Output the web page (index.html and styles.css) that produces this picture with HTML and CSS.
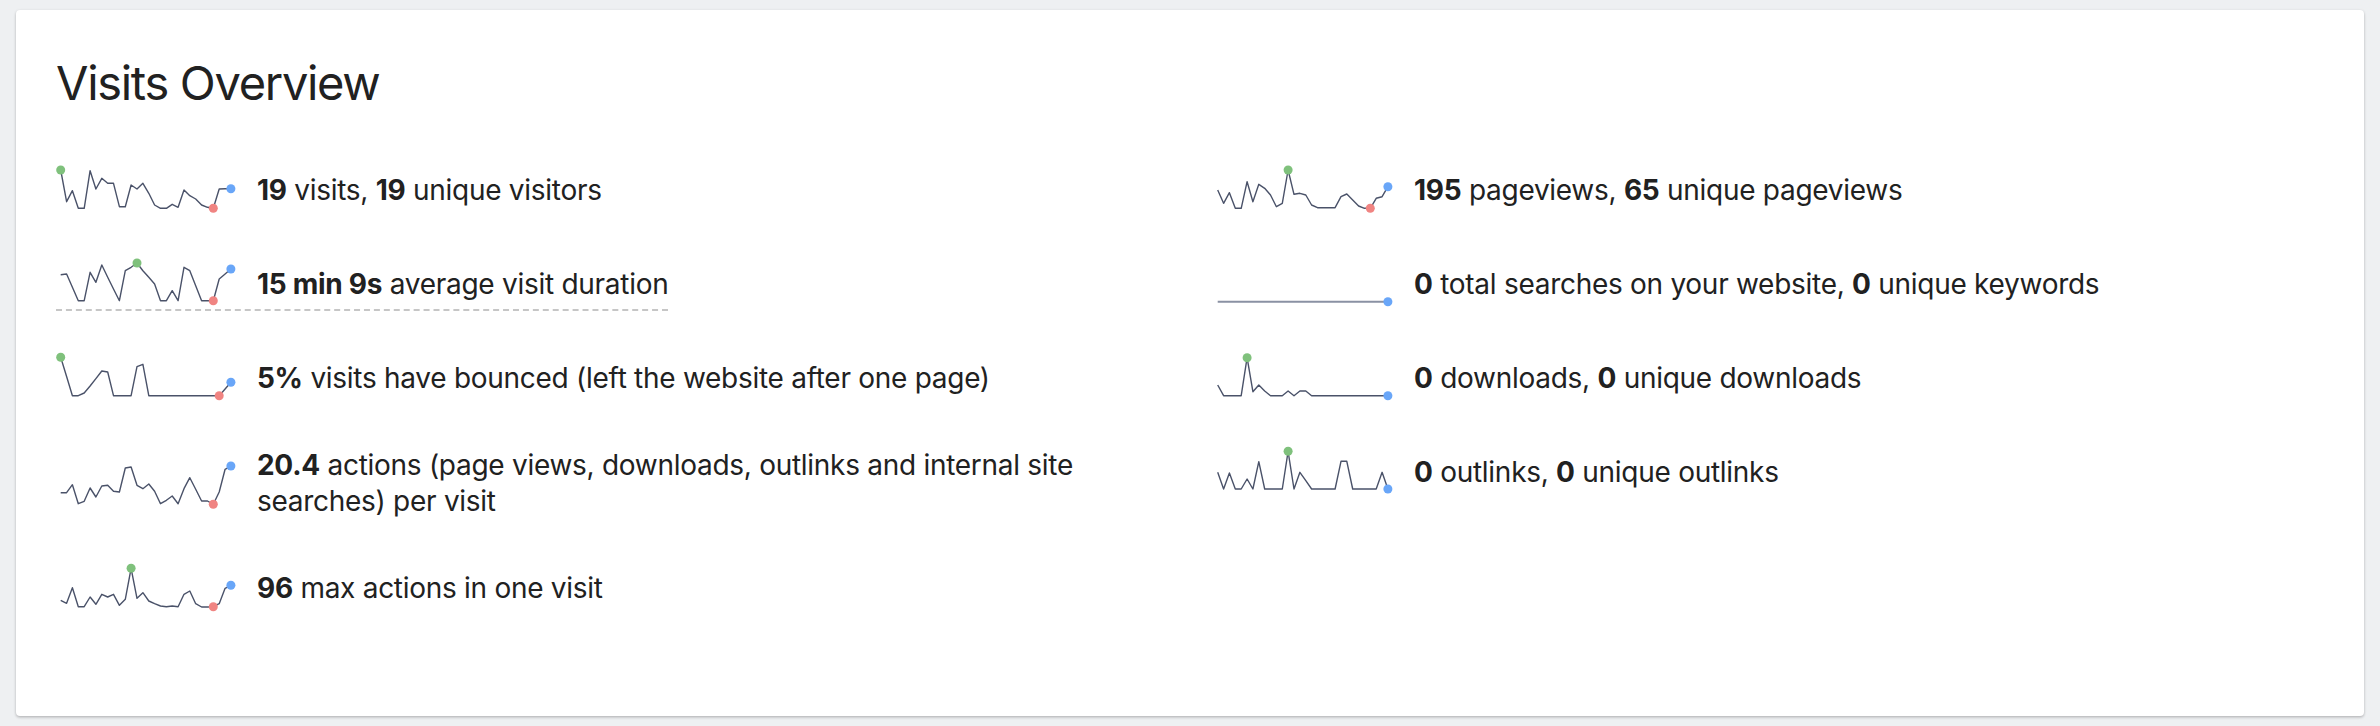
FILE: index.html
```html
<!DOCTYPE html>
<html lang="en">
<head>
<meta charset="utf-8">
<title>Visits Overview</title>
<link rel="stylesheet" href="styles.css">
</head>
<body>
<div class="card">
  <h2 class="title">Visits Overview</h2>
  <div class="grid">
    <div class="col">
      <div class="row">
        <svg class="spark" width="180" height="50" viewBox="0 0 180 50">
          <polyline points="4.7,5 10.6,36.7 16.4,25.7 22.3,43.3 28.2,43.3 34.1,5.7 39.9,24 45.8,13.3 51.7,18.3 57.5,18.3 63.4,41.7 69.3,41.7 75.1,20 81,24 86.9,18.3 92.8,28.3 98.6,40 104.5,43.3 110.4,43.3 116.2,39.3 122.1,42.3 128,25 133.8,30.7 139.7,34 145.6,40 151.5,42.3 157.3,43.3 163.2,24 169.1,23.7 174.9,23.7"/>
          <circle class="max" cx="4.7" cy="5" r="4.5"/>
          <circle class="min" cx="157.3" cy="43.3" r="4.5"/>
          <circle class="last" cx="174.9" cy="23.7" r="4.5"/>
        </svg>
        <div class="text"><strong>19</strong> visits, <strong>19</strong> unique visitors</div>
      </div>
      <div class="row active">
        <svg class="spark" width="180" height="50" viewBox="0 0 180 50">
          <polyline points="4.7,15.7 10.6,15 16.4,28.3 22.3,41.7 28.2,41.7 34.1,13.3 39.9,23.3 45.8,6 51.7,18.3 57.5,30 63.4,41.7 69.3,11.7 75.1,8.3 81,4 86.9,11.7 92.8,18.3 98.6,25 104.5,41.7 110.4,41.7 116.2,31.7 122.1,41.7 128,8.3 133.8,11.7 139.7,26.7 145.6,41.7 151.5,41.7 157.3,41.7 163.2,20 169.1,15 174.9,10"/>
          <circle class="max" cx="81" cy="4" r="4.5"/>
          <circle class="min" cx="157.3" cy="41.7" r="4.5"/>
          <circle class="last" cx="174.9" cy="10" r="4.5"/>
        </svg>
        <div class="text"><strong>15 min 9s</strong> average visit duration</div>
      </div>
      <div class="row">
        <svg class="spark" width="180" height="50" viewBox="0 0 180 50">
          <polyline points="4.7,4.3 10.6,23.5 16.4,42.7 22.3,42.7 28.2,40 34.1,33 39.9,25.6 45.8,18 51.7,19 57.5,42.7 63.4,42.7 69.3,42.7 75.1,42.7 81,13.7 86.9,11.3 92.8,42.7 98.6,42.7 104.5,42.7 110.4,42.7 116.2,42.7 122.1,42.7 128,42.7 133.8,42.7 139.7,42.7 145.6,42.7 151.5,42.7 157.3,42.7 163.2,42.7 169.1,36 174.9,29.3"/>
          <circle class="max" cx="4.7" cy="4.3" r="4.5"/>
          <circle class="min" cx="163.2" cy="42.7" r="4.5"/>
          <circle class="last" cx="174.9" cy="29.3" r="4.5"/>
        </svg>
        <div class="text"><strong>5%</strong> visits have bounced (left the website after one page)</div>
      </div>
      <div class="row">
        <svg class="spark" width="180" height="50" viewBox="0 0 180 50">
          <polyline points="4.7,34.7 10.6,34.7 16.4,26.7 22.3,45.7 28.2,43.3 34.1,30 39.9,39 45.8,28 51.7,27.3 57.5,33.3 63.4,34 69.3,10 75.1,9 81,27.3 86.9,30.7 92.8,26 98.6,33.3 104.5,45.7 110.4,42.3 116.2,38 122.1,45.7 128,30.7 133.8,19.7 139.7,31.3 145.6,43 151.5,43 157.3,46.3 163.2,34 169.1,11.3 174.9,8"/>
          <circle class="min" cx="157.3" cy="46.3" r="4.5"/>
          <circle class="last" cx="174.9" cy="8" r="4.5"/>
        </svg>
        <div class="text"><strong>20.4</strong> actions (page views, downloads, outlinks and internal site searches) per visit</div>
      </div>
      <div class="row">
        <svg class="spark" width="180" height="50" viewBox="0 0 180 50">
          <polyline points="4.7,37.3 10.6,40.3 16.4,24.7 22.3,43.7 28.2,43.7 34.1,34 39.9,41.3 45.8,31.3 51.7,34 57.5,31.3 63.4,42.3 69.3,36.3 75.1,5.3 81,35.3 86.9,29.7 92.8,38 98.6,40.7 104.5,43 110.4,43.7 116.2,43 122.1,43.7 128,31.3 133.8,28 139.7,40.7 145.6,44 151.5,44 157.3,43.7 163.2,40.7 169.1,25.3 174.9,22.3"/>
          <circle class="max" cx="75.1" cy="5.3" r="4.5"/>
          <circle class="min" cx="157.3" cy="43.7" r="4.5"/>
          <circle class="last" cx="174.9" cy="22.3" r="4.5"/>
        </svg>
        <div class="text"><strong>96</strong> max actions in one visit</div>
      </div>
    </div>
    <div class="col">
      <div class="row">
        <svg class="spark" width="180" height="50" viewBox="0 0 180 50">
          <polyline points="4.7,25 10.6,38.3 16.4,27.7 22.3,43.3 28.2,43.3 34.1,16.7 39.9,36.7 45.8,19.3 51.7,23.3 57.5,30 63.4,41.7 69.3,38.3 75.1,5 81,29.3 86.9,28.3 92.8,30 98.6,40 104.5,42.7 110.4,42.7 116.2,42.7 122.1,42.7 128,31.7 133.8,29 139.7,35 145.6,41 151.5,43.3 157.3,43.3 163.2,33.3 169.1,31.7 174.9,21.7"/>
          <circle class="max" cx="75.1" cy="5" r="4.5"/>
          <circle class="min" cx="157.3" cy="43.3" r="4.5"/>
          <circle class="last" cx="174.9" cy="21.7" r="4.5"/>
        </svg>
        <div class="text"><strong>195</strong> pageviews, <strong>65</strong> unique pageviews</div>
      </div>
      <div class="row">
        <svg class="spark" width="180" height="50" viewBox="0 0 180 50">
          <polyline class="flat" points="4.7,42.7 174.9,42.7"/>
          <circle class="last" cx="174.9" cy="42.7" r="4.5"/>
        </svg>
        <div class="text"><strong>0</strong> total searches on your website, <strong>0</strong> unique keywords</div>
      </div>
      <div class="row">
        <svg class="spark" width="180" height="50" viewBox="0 0 180 50">
          <polyline points="4.7,32 10.6,42.7 16.4,42.7 22.3,42.7 28.2,42.7 34.1,4.7 39.9,38.7 45.8,32 51.7,38 57.5,42.7 63.4,42.7 69.3,42.7 75.1,38 81,42.7 86.9,38 92.8,38 98.6,42.7 174.9,42.7"/>
          <circle class="max" cx="34.1" cy="4.7" r="4.5"/>
          <circle class="last" cx="174.9" cy="42.7" r="4.5"/>
        </svg>
        <div class="text"><strong>0</strong> downloads, <strong>0</strong> unique downloads</div>
      </div>
      <div class="row">
        <svg class="spark" width="180" height="50" viewBox="0 0 180 50">
          <polyline points="4.7,25.3 10.6,42 16.4,26 22.3,42 28.2,42 34.1,32 39.9,42 45.8,14.7 51.7,42 69.3,42 75.1,4.3 81,42 86.9,25.3 92.8,33.7 98.6,42 122.1,42 128,14.3 133.8,14.3 139.7,42 163.2,42 169.1,25.3 174.9,42"/>
          <circle class="max" cx="75.1" cy="4.3" r="4.5"/>
          <circle class="last" cx="174.9" cy="42" r="4.5"/>
        </svg>
        <div class="text"><strong>0</strong> outlinks, <strong>0</strong> unique outlinks</div>
      </div>
    </div>
  </div>
</div>
</body>
</html>
```
FILE: styles.css
```css
html, body {
  margin: 0;
}

body {
  background: #eef0f2;
  padding: 10px 16px;
  font-family: "Inter", "Liberation Sans", Arial, sans-serif;
  color: #212121;
}

.card {
  background: #ffffff;
  border-radius: 4px;
  box-shadow: 0 1px 3px rgba(0, 0, 0, 0.22), 0 2px 3px rgba(0, 0, 0, 0.06);
  padding: 45px 40px 101px;
}

.title {
  margin: 0 0 54px;
  font-size: 47px;
  line-height: 56px;
  font-weight: 400;
  letter-spacing: -1.3px;
  color: #212121;
}

.grid {
  display: grid;
  grid-template-columns: 1157px 1fr;
}

.col {
  display: flex;
  flex-direction: column;
  align-items: flex-start;
  gap: 42px;
}

.row {
  display: flex;
  align-items: center;
  gap: 21px;
  border-bottom: 2px dashed transparent;
}

.row.active {
  border-bottom-color: #c6c6c6;
}

.spark {
  flex: none;
  display: block;
  overflow: visible;
}

.spark polyline {
  fill: none;
  stroke: #4a5269;
  stroke-width: 1.4;
  stroke-linejoin: round;
}

.spark polyline.flat {
  stroke: #8a91a3;
  stroke-width: 2;
}

.spark .max { fill: #7fc17c; }
.spark .min { fill: #f08482; }
.spark .last { fill: #69a6f8; }

.text {
  font-size: 28px;
  line-height: 36px;
  letter-spacing: -0.28px;
  max-width: 880px;
}

.text strong {
  font-weight: 700;
}
```
